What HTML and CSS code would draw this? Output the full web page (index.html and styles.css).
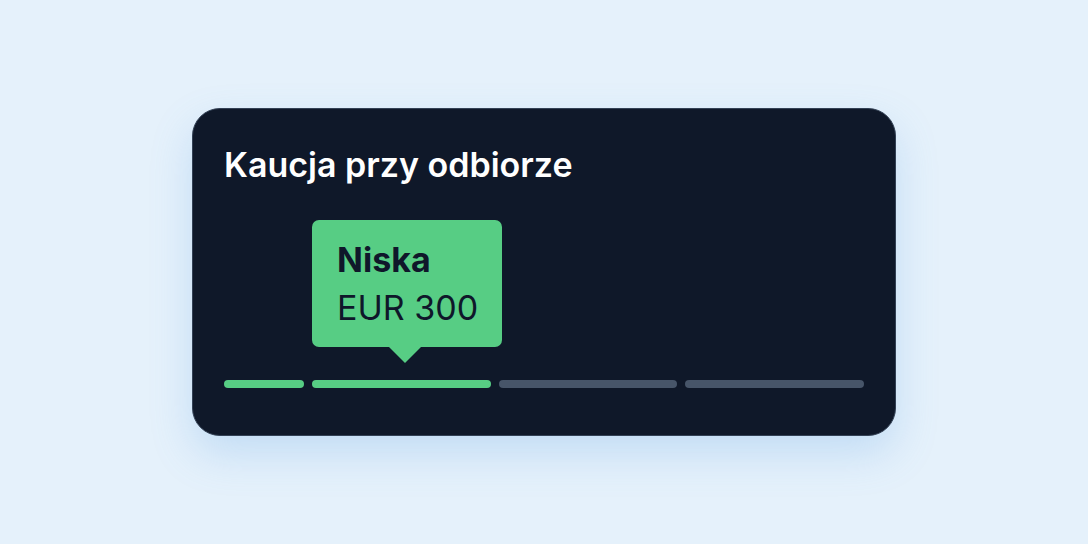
FILE: index.html
```html
<!DOCTYPE html>
<html lang="pl">
<head>
    <meta charset="UTF-8">
    <meta name="viewport" content="width=device-width, initial-scale=1.0">
    <title>Kaucja przy odbiorze</title>
    <link rel="stylesheet" href="styles.css">
</head>
<body>
    <div class="deposit-card">
        <h2>Kaucja przy odbiorze</h2>

        <div class="level-area">
            <div class="level-tip">
                <div class="tip-label">Niska</div>
                <div class="tip-value">EUR 300</div>
            </div>

            <!-- Skala kaucji: dwa pierwsze odcinki aktywne -->
            <div class="level-track">
                <div class="segment first active"></div>
                <div class="segment active"></div>
                <div class="segment"></div>
                <div class="segment"></div>
            </div>
        </div>
    </div>
</body>
</html>
```

FILE: styles.css
```css
:root {
    --page-bg: #e5f1fb;
    --card-bg: #0f1829;
    --card-border: #334155;
    --green: #57cd84;
    --track: #475569;
    --ink: #0f172a;
}

* {
    margin: 0;
    padding: 0;
    box-sizing: border-box;
}

body {
    background-color: var(--page-bg);
    font-family: Inter, 'Noto Sans', sans-serif;
    height: 100vh;
    display: flex;
    align-items: center;
    justify-content: center;
}

.deposit-card {
    width: 704px;
    height: 328px;
    margin-bottom: 1px;
    background-color: var(--card-bg);
    border: 1px solid var(--card-border);
    border-radius: 28px;
    padding: 36px 31px 0;
    box-shadow: 0 18px 40px rgba(96, 165, 230, 0.25);
}

.deposit-card h2 {
    color: #ffffff;
    font-size: 34px;
    font-weight: 600;
    line-height: 40px;
}

.level-area {
    margin-top: 35px;
}

.level-tip {
    position: relative;
    width: 190px;
    margin-left: 88px;
    background-color: var(--green);
    color: var(--ink);
    border-radius: 7px;
    padding: 16px 25px 15px;
    white-space: nowrap;
}

/* strzałka pod dymkiem */
.level-tip::after {
    content: '';
    position: absolute;
    left: 77px;
    top: 100%;
    border-left: 16px solid transparent;
    border-right: 16px solid transparent;
    border-top: 16px solid var(--green);
}

.tip-label {
    font-size: 34px;
    font-weight: 700;
    line-height: 48px;
}

.tip-value {
    font-size: 34px;
    font-weight: 400;
    line-height: 48px;
}

.level-track {
    display: flex;
    gap: 8px;
    margin-top: 33px;
}

.segment {
    flex: 1;
    height: 8px;
    border-radius: 4px;
    background-color: var(--track);
}

.segment.first {
    flex: 0 0 80px;
}

.segment.active {
    background-color: var(--green);
}
```
